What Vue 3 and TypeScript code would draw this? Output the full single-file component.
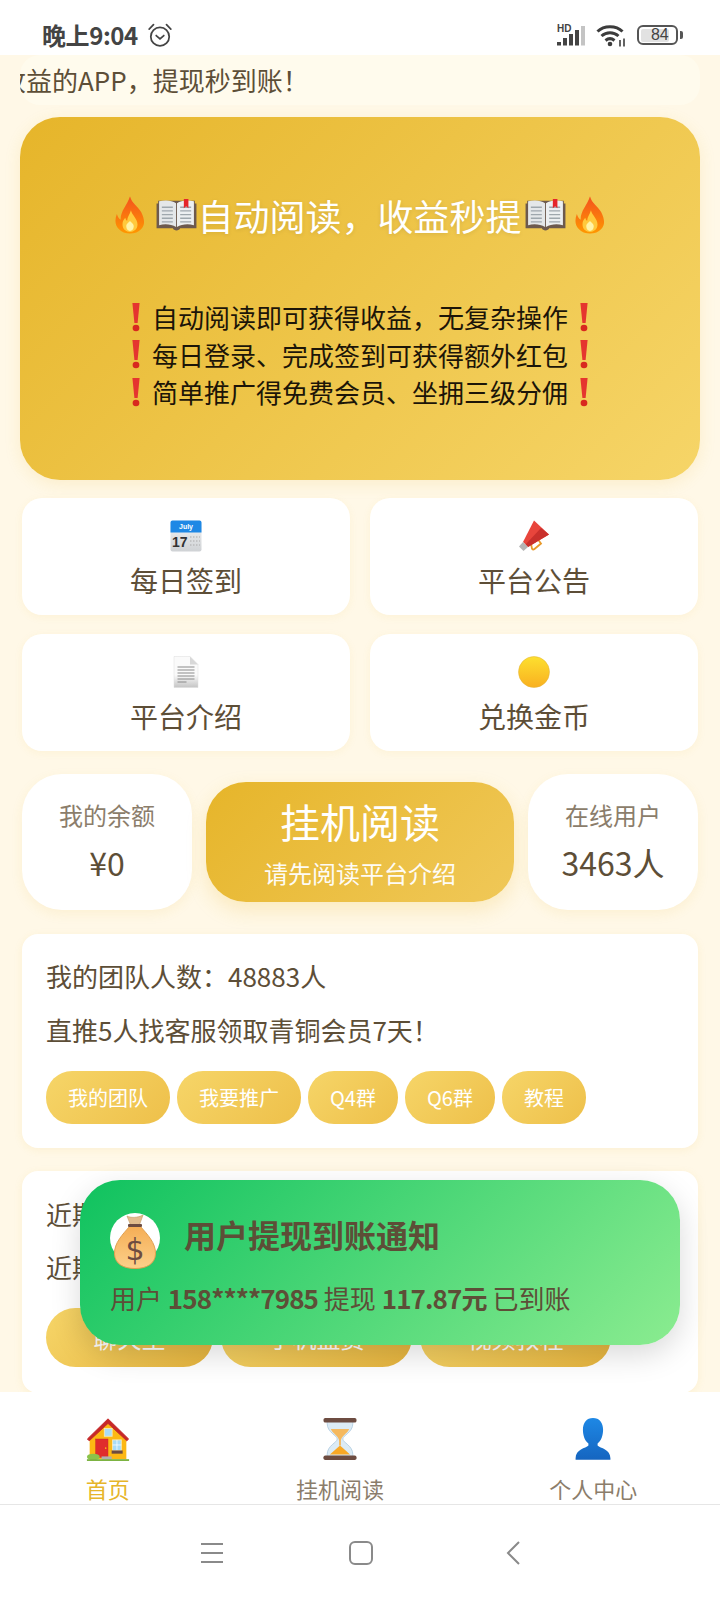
<script setup lang="ts">
const alerts = [
  '自动阅读即可获得收益，无复杂操作',
  '每日登录、完成签到可获得额外红包',
  '简单推广得免费会员、坐拥三级分佣',
]
const teamBtns = ['我的团队', '我要推广', 'Q4群', 'Q6群', '教程']
const nearBtns = ['聊天室', '手机盈赏', '视频教程']
</script>

<template>
  <div class="screen">
    <header class="status">
      <div class="status-left">
        <span class="time">晚上9:04</span>
        <svg class="alarm" viewBox="0 0 24 24" fill="none" stroke="#444" stroke-width="1.6" stroke-linecap="round">
          <circle cx="12" cy="13.500" r="8.500" />
          <path d="M8.500 12.500l3.500 3 3.500-3" />
          <path d="M2 6.500L6 2.500M22 6.500L18 2.500" />
        </svg>
      </div>
      <div class="status-right">
        <svg width="29" height="22" viewBox="0 0 29 22">
          <text x="0" y="8" class="hd">HD</text>
          <rect x="0" y="18" width="4" height="3.500" fill="#444" />
          <rect x="6" y="14" width="4" height="7.500" fill="#444" />
          <rect x="12" y="10" width="4" height="11.500" fill="#444" />
          <rect x="18" y="6" width="4" height="15.500" fill="#444" />
          <rect x="24" y="2" width="4" height="19.500" fill="#c4c4c4" />
        </svg>
        <svg width="30" height="24" viewBox="0 0 30 24" fill="none" stroke="#3c3c3c" stroke-width="3">
          <path d="M1.500 8.500C8 2 20 2 26.500 8.500" />
          <path d="M5.500 13C10.500 8.500 17.500 8.500 22.500 13" />
          <path d="M9.500 17.500C12.500 15 15.500 15 18.500 17.500" />
          <circle cx="14" cy="21" r="2.300" fill="#3c3c3c" stroke="none" />
          <path d="M24 17v6.500M28 15.500v8" stroke-width="1.600" />
        </svg>
        <div class="battery"><span class="battery-fill">84</span></div>
        <div class="battery-tip"></div>
      </div>
    </header>

    <main class="page">
      <div class="marquee">
        <span class="marquee-text">收益的APP，提现秒到账！</span>
      </div>

      <section class="hero">
        <h1 class="hero-title">
          <svg class="e-fire" viewBox="0 0 32 40"><use href="#fire" /></svg>
          <svg class="e-book e-book-l" viewBox="0 0 44 36"><use href="#book" /></svg>
          <span class="hero-text">自动阅读，收益秒提</span>
          <svg class="e-book" viewBox="0 0 44 36"><use href="#book" /></svg>
          <svg class="e-fire e-fire-r" viewBox="0 0 32 40"><use href="#fire" /></svg>
        </h1>
        <ul class="alerts">
          <li v-for="a in alerts" :key="a" class="alert">
            <svg class="bang" viewBox="0 0 10 30" preserveAspectRatio="none"><path d="M0.500 1h9L7 21H3z" fill="#e5352f" /><ellipse cx="5" cy="26" rx="4.200" ry="3.200" fill="#d8281f" /></svg>
            <span>{{ a }}</span>
            <svg class="bang" viewBox="0 0 10 30" preserveAspectRatio="none"><path d="M0.500 1h9L7 21H3z" fill="#e5352f" /><ellipse cx="5" cy="26" rx="4.200" ry="3.200" fill="#d8281f" /></svg>
          </li>
        </ul>
      </section>

      <section class="actions">
        <div class="action">
          <svg class="a-icon" viewBox="0 0 32 32">
            <defs>
              <linearGradient id="calg" x1="0" y1="0" x2="0" y2="1"><stop offset="0" stop-color="#f4f5f6" /><stop offset="1" stop-color="#cfd2d5" /></linearGradient>
            </defs>
            <rect x="0.500" y="0.500" width="31" height="31" rx="2" fill="url(#calg)" />
            <path d="M0.500 12.500V2.500a2 2 0 0 1 2-2h27a2 2 0 0 1 2 2v10z" fill="#1e88e5" />
            <text x="16" y="9" class="cal-m">July</text>
            <text x="2" y="27" class="cal-d">17</text>
            <path d="M20 17h10M20 21h10M20 25h10" stroke="#aaa" stroke-width="1.200" stroke-dasharray="1.500 1.500" />
          </svg>
          <span>每日签到</span>
        </div>
        <div class="action">
          <svg class="a-icon" viewBox="0 0 32 32">
            <path d="M13 24l7-4.500 3 4-6.500 5.500a1.800 1.800 0 0 1-2.500-.4z" fill="none" stroke="#e8992a" stroke-width="1.800" />
            <path d="M16 0.500L31 14.500 10 27 5 22z" fill="#e8453c" />
            <path d="M23 8l8 6.500L10 27l-2.500-2.500z" fill="#c9302c" />
            <path d="M5 22l5 5-4.500 4L1 26.500z" fill="#b5b5b5" />
          </svg>
          <span>平台公告</span>
        </div>
        <div class="action">
          <svg class="a-icon" viewBox="0 0 32 32">
            <defs>
              <linearGradient id="docg" x1="0" y1="0" x2="0" y2="1"><stop offset="0.600" stop-color="#fafafa" /><stop offset="1" stop-color="#c4c4c4" /></linearGradient>
              <linearGradient id="coing" x1="0" y1="0" x2="0" y2="1"><stop offset="0" stop-color="#fde02f" /><stop offset="1" stop-color="#f9b020" /></linearGradient>
            </defs>
            <path d="M4 0.500h16l8 8v23H4z" fill="url(#docg)" stroke="#ddd" stroke-width="0.500" />
            <path d="M20 0.500v8h8z" fill="#d8d8d8" />
            <path d="M7.500 11h17M7.500 14h17M7.500 17h17M7.500 20h17M7.500 23h17M7.500 26h9" stroke="#8a8a8a" stroke-width="1" />
          </svg>
          <span>平台介绍</span>
        </div>
        <div class="action">
          <svg class="a-icon" viewBox="0 0 32 32">
            <circle cx="16" cy="16" r="15.500" fill="url(#coing)" stroke="#e3b53a" stroke-width="0.500" />
          </svg>
          <span>兑换金币</span>
        </div>
      </section>

      <section class="stats">
        <div class="stat">
          <span class="stat-label">我的余额</span>
          <span class="stat-value">¥0</span>
        </div>
        <div class="read-btn">
          <span class="read-title">挂机阅读</span>
          <span class="read-sub">请先阅读平台介绍</span>
        </div>
        <div class="stat">
          <span class="stat-label">在线用户</span>
          <span class="stat-value">3463人</span>
        </div>
      </section>

      <section class="card team">
        <p class="line">我的团队人数：48883人</p>
        <p class="line">直推5人找客服领取青铜会员7天！</p>
        <div class="pills">
          <span v-for="b in teamBtns" :key="b" class="pill">{{ b }}</span>
        </div>
      </section>

      <section class="card near">
        <p class="line">近期活动</p>
        <p class="line">近期公告</p>
        <div class="pills big">
          <span v-for="b in nearBtns" :key="b" class="pill">{{ b }}</span>
        </div>
      </section>

      <aside class="toast">
        <div class="toast-head">
          <div class="bag-wrap">
            <svg class="bag" viewBox="0 0 42 54">
              <defs>
                <linearGradient id="bagg" x1="0" y1="0" x2="0" y2="1"><stop offset="0" stop-color="#f5ad55" /><stop offset="1" stop-color="#fcd08a" /></linearGradient>
              </defs>
              <path d="M13 1c3 2 11 2 16-1l-4 11h-8z" fill="#e2bd8e" stroke="#c9a06c" stroke-width="0.700" />
              <path d="M16 11C9 19 0 28 .5 39c.5 10 9 14.500 20.500 14.500S41 49 41.500 39c.5-11-8.500-20-15.500-28z" fill="url(#bagg)" stroke="#e0a050" stroke-width="1" />
              <rect x="14" y="9" width="14" height="3" rx="1" fill="#6d4c41" />
              <text x="21" y="45" class="dollar">$</text>
            </svg>
          </div>
          <span class="toast-title">用户提现到账通知</span>
        </div>
        <p class="toast-body">用户 <b>158****7985</b> 提现 <b>117.87元</b> 已到账</p>
      </aside>
    </main>

    <nav class="tabs">
      <div class="tab active">
        <svg class="tab-icon" viewBox="0 0 48 48">
          <path d="M4 24L24 6l20 18v22H4z" fill="#fdb813" />
          <path d="M1.500 24L24 2l22.500 22-2 2L24 7 3.500 26z" fill="#c62828" stroke="#c62828" stroke-linejoin="round" />
          <rect x="20" y="12.500" width="8.500" height="8.500" fill="#a9dcf5" stroke="#f6e9b8" />
          <rect x="10.500" y="24" width="13.500" height="20" fill="#e02c2c" stroke="#c62828" stroke-width="0.500" />
          <circle cx="21.500" cy="34" r="0.900" fill="#fdb813" />
          <rect x="29" y="25" width="9.500" height="11.500" fill="#a9dcf5" stroke="#f6e9b8" />
          <path d="M33.750 25v11.500M29 30.500h9.500" stroke="#fff" stroke-width="0.800" />
          <rect x="28" y="36.500" width="12" height="3.500" fill="#6d4c41" />
          <rect x="17" y="43" width="11" height="3.500" fill="#b0b0b0" />
          <ellipse cx="8" cy="43.500" rx="7" ry="3.500" fill="#8bc34a" />
          <rect x="1" y="46" width="46" height="2" fill="#7cb342" />
        </svg>
        <span>首页</span>
      </div>
      <div class="tab">
        <svg class="tab-icon" viewBox="0 0 48 48">
          <path d="M10 4h28v3c0 10-11 13-11 17s11 7 11 17v3H10v-3c0-10 11-13 11-17S10 17 10 7z" fill="#dcebf5" stroke="#b5cfe3" />
          <path d="M14 13h20c-2 5-9 8-9 13v5h-2v-5c0-5-7-8-9-13z" fill="#f5b95f" />
          <path d="M24 31l11 10H13z" fill="#f9a825" />
          <rect x="6" y="1" width="36" height="5" rx="2" fill="#6d4c41" />
          <rect x="6" y="42" width="36" height="5" rx="2" fill="#6d4c41" />
        </svg>
        <span>挂机阅读</span>
      </div>
      <div class="tab">
        <svg class="tab-icon" viewBox="0 0 48 48">
          <defs>
            <linearGradient id="userg" x1="0" y1="0" x2="0" y2="1"><stop offset="0" stop-color="#1e88e5" /><stop offset="1" stop-color="#1565c0" /></linearGradient>
          </defs>
          <path d="M24 1c7 0 11 5 11 13 0 6-2 12-6 15v2c3 3 14 4 14 14v1.500H5V45c0-10 11-11 14-14v-2c-4-3-6-9-6-15C13 6 17 1 24 1z" fill="url(#userg)" />
        </svg>
        <span>个人中心</span>
      </div>
    </nav>

    <footer class="sys-nav">
      <svg width="22" height="22" viewBox="0 0 22 22" stroke="#8a8a8a" stroke-width="2"><path d="M0 2h22M0 11h22M0 20h22" /></svg>
      <svg class="sys-home" width="24" height="24" viewBox="0 0 24 24" fill="none" stroke="#8a8a8a" stroke-width="2"><rect x="1" y="1" width="22" height="22" rx="5" /></svg>
      <svg width="14" height="24" viewBox="0 0 14 24" fill="none" stroke="#8a8a8a" stroke-width="2"><path d="M13 1L2 12l11 11" /></svg>
    </footer>

    <svg class="defs" width="0" height="0">
      <defs>
        <linearGradient id="fireg" x1="0" y1="0" x2="0" y2="1"><stop offset="0" stop-color="#f4511e" /><stop offset="1" stop-color="#ff9800" /></linearGradient>
        <symbol id="fire" viewBox="0 0 32 40">
          <path d="M16 0c2 8 8 10 12 17 4 8 4 14 0 18-3 3-7 5-12 5S7 38 4 35C0 31-.5 25 2 19c1 3 2 5 4 6C6 15 13 10 16 0z" fill="url(#fireg)" />
          <path d="M17 15c1 5 7 9 7 15 0 5-4 8-8 8s-8-3-8-8c0-3 1-5 3-7 .5 2 1 3 2 3 0-4 3-7 4-11z" fill="#ffc93c" />
          <path d="M16 26c1 2 4 3 4 6s-2 5-4 5-4-2-4-5 3-4 4-6z" fill="#fff3a8" />
        </symbol>
        <symbol id="book" viewBox="0 0 44 36">
          <path d="M0 5h2V2h40v3h2v27H26c-1 3-7 3-8 0H0z" fill="#6d5a4e" />
          <path d="M3 2.500c7-1.500 14-1 18.500 2v26c-5-3-12-3.500-18.500-2z" fill="#e4e7e9" />
          <path d="M41 2.500c-7-1.500-14-1-18.500 2v26c5-3 12-3.500 18.500-2z" fill="#eceff1" />
          <path d="M6 9h12M6 13h12M6 17h12M6 21h12M6 25h12M26 9h12M26 13h12M26 17h12M26 21h12M26 25h12" stroke="#9ea7ad" stroke-width="1.500" />
          <path d="M30 0h5v10l-2.500-2-2.500 2z" fill="#e5252a" />
        </symbol>
      </defs>
    </svg>
  </div>
</template>

<style>
html, body { margin: 0; background: #fff8e7; }
</style>

<style scoped>
* { box-sizing: border-box; }
.screen {
  position: relative;
  width: 720px;
  height: 1600px;
  overflow: hidden;
  display: flex;
  flex-direction: column;
  background: #fff;
  color: #5d4e37;
  font-family: "Noto Sans CJK SC", "Noto Sans", sans-serif;
}
.defs { position: absolute; }
.status {
  height: 55px;
  flex: none;
  display: flex;
  justify-content: space-between;
  align-items: flex-start;
  padding: 19px 37px 0 42px;
  background: #fff;
}
.status-left { display: flex; align-items: center; gap: 9px; }
.time { font-size: 24px; font-weight: 700; line-height: 32px; color: #444; letter-spacing: -0.400px; }
.alarm { width: 26px; height: 26px; }
.status-right { display: flex; align-items: center; gap: 10px; height: 32px; }
.hd { font: 700 10px "Liberation Sans", sans-serif; fill: #444; }
.battery {
  margin-left: 1px;
  width: 41px;
  height: 20px;
  border: 2.500px solid #555;
  border-radius: 6px;
  padding: 1.500px 2px;
  display: flex;
}
.battery-fill {
  flex: 0 0 84%;
  background: #e2e2e2;
  border-radius: 2px;
  font: 16px/12px "Liberation Sans", sans-serif;
  text-align: right;
  color: #444;
}
.battery-tip { width: 3px; height: 8px; margin-left: -8px; background: #555; border-radius: 0 2px 2px 0; }

.page {
  position: relative;
  flex: 1;
  min-height: 0;
  overflow: hidden;
  padding: 0 20px;
  background: #fff8e7;
}
.marquee {
  height: 50px;
  border-radius: 20px;
  background: #fffbed;
  overflow: hidden;
  display: flex;
  align-items: center;
  margin-bottom: 12px;
}
.marquee-text { font-size: 26px; white-space: nowrap; margin-left: -20px; line-height: 50px; }
.hero {
  height: 363px;
  border-radius: 40px;
  background: linear-gradient(135deg, #e6b52a 0%, #f6d568 100%);
  box-shadow: 0 4px 16px rgba(230, 181, 42, 0.15);
  padding-top: 73px;
  margin-bottom: 18px;
}
.hero-title {
  margin: 0;
  height: 50px;
  display: flex;
  align-items: center;
  justify-content: center;
  font-size: 36px;
  font-weight: 400;
  line-height: 50px;
  color: #fff;
  text-shadow: 0 1px 4px rgba(0, 0, 0, 0.1);
}
.hero-text { margin-right: 3px; }
.e-fire { width: 30px; height: 40px; flex: none; }
.e-book { width: 41px; height: 33px; flex: none; }
.e-book-l { margin-left: 11px; }
.e-fire-r { margin-left: 9px; }
.alerts { list-style: none; margin: 58px 0 0; padding: 0; }
.alert {
  height: 37.500px;
  display: flex;
  align-items: center;
  justify-content: center;
  gap: 12px;
  font-size: 26px;
  line-height: 37px;
  color: #1c1508;
}
.bang { width: 8px; height: 30px; flex: none; }

.actions {
  display: grid;
  grid-template-columns: 1fr 1fr;
  column-gap: 20px;
  row-gap: 19px;
  padding: 0 2px;
  margin-bottom: 23px;
}
.action {
  height: 117px;
  border-radius: 20px;
  background: #fff;
  box-shadow: 0 2px 8px rgba(230, 181, 42, 0.08);
  display: flex;
  flex-direction: column;
  align-items: center;
  padding-top: 22px;
  font-size: 28px;
  line-height: 40px;
  color: #5d4e37;
}
.a-icon { width: 32px; height: 32px; margin-bottom: 8px; }
.cal-m { font: 700 7px "Liberation Sans", sans-serif; fill: #fff; text-anchor: middle; }
.cal-d { font: 700 14px "Liberation Sans", sans-serif; fill: #333; }

.stats { display: flex; align-items: center; justify-content: space-between; padding: 0 2px; margin-bottom: 24px; }
.stat {
  width: 170px;
  height: 136px;
  border-radius: 40px;
  background: #fff;
  box-shadow: 0 4px 12px rgba(230, 181, 42, 0.1);
  display: flex;
  flex-direction: column;
  align-items: center;
  padding-top: 23px;
}
.stat-label { font-size: 24px; line-height: 36px; color: #8b7d6b; }
.stat-value { font-size: 32px; line-height: 46px; margin-top: 6px; color: #5d4e37; }
.read-btn {
  width: 308px;
  height: 120px;
  border-radius: 40px;
  background: linear-gradient(135deg, #e6b52a 0%, #f0c858 100%);
  box-shadow: 0 8px 20px rgba(230, 181, 42, 0.22);
  display: flex;
  flex-direction: column;
  align-items: center;
  color: #fff;
  padding-top: 10px;
}
.read-title { font-size: 40px; line-height: 58px; }
.read-sub { font-size: 24px; line-height: 36px; margin-top: 5px; opacity: 0.95; }

.card {
  margin: 0 2px 23px;
  border-radius: 16px;
  background: #fff;
  box-shadow: 0 2px 8px rgba(230, 181, 42, 0.1);
  padding: 23px 24px 0;
}
.team { height: 214px; }
.near { height: 222px; padding-top: 24px; }
.near .line:first-child { margin-bottom: 15px; }
.line { margin: 0 0 16px; font-size: 26px; line-height: 38px; color: #5d4e37; }
.line:nth-child(2) { margin-bottom: 0; }
.pills { display: flex; gap: 7px; margin-top: 22px; }
.pill {
  height: 53px;
  padding: 0 22px;
  border-radius: 26px;
  background: linear-gradient(135deg, #f6d568 0%, #eec04a 100%);
  font-size: 20px;
  line-height: 53px;
  color: #fff;
}
.big { gap: 8px; }
.big .pill {
  height: 59px;
  border-radius: 30px;
  padding: 0 47.500px;
  font-size: 24px;
  line-height: 59px;
  background: linear-gradient(135deg, #f6d568 0%, #e6b43e 100%);
}
.toast {
  position: absolute;
  left: 80px;
  top: 1125px;
  width: 600px;
  height: 165px;
  border-radius: 40px;
  background: linear-gradient(135deg, #0fc25f 0%, #8bec90 100%);
  box-shadow: 0 10px 30px rgba(0, 0, 0, 0.15);
  padding: 30px 30px 0;
}
.toast-head { display: flex; align-items: center; gap: 24px; height: 56px; }
.bag-wrap {
  position: relative;
  width: 50px;
  height: 50px;
  border-radius: 50%;
  background: #fff;
  flex: none;
}
.bag { position: absolute; left: 4px; top: 2px; width: 42px; height: 54px; }
.dollar { font: 400 30px "DejaVu Sans", sans-serif; fill: #6d4c41; text-anchor: middle; }
.toast-title { font-size: 32px; font-weight: 700; line-height: 46px; color: #5d4e37; margin-bottom: 8px; }
.toast-body { margin: 13px 0 0; font-size: 26px; line-height: 38px; color: #5d4e37; white-space: nowrap; }
.toast-body b { font-weight: 700; letter-spacing: -0.900px; }

.tabs {
  height: 113px;
  flex: none;
  display: flex;
  justify-content: space-around;
  padding-left: 2px;
  background: #fff;
  border-bottom: 1px solid #e6e6e6;
}
.tab {
  display: flex;
  flex-direction: column;
  align-items: center;
  padding-top: 25px;
  font-size: 22px;
  line-height: 32px;
  color: #8b7d6b;
}
.tab.active { color: #e6b52a; }
.tab-icon { width: 46px; height: 46px; margin-bottom: 11px; }
.sys-nav {
  height: 95px;
  flex: none;
  background: #fff;
  display: flex;
  align-items: center;
  justify-content: center;
}
.sys-home { margin: 0 133px 0 126px; }
</style>
